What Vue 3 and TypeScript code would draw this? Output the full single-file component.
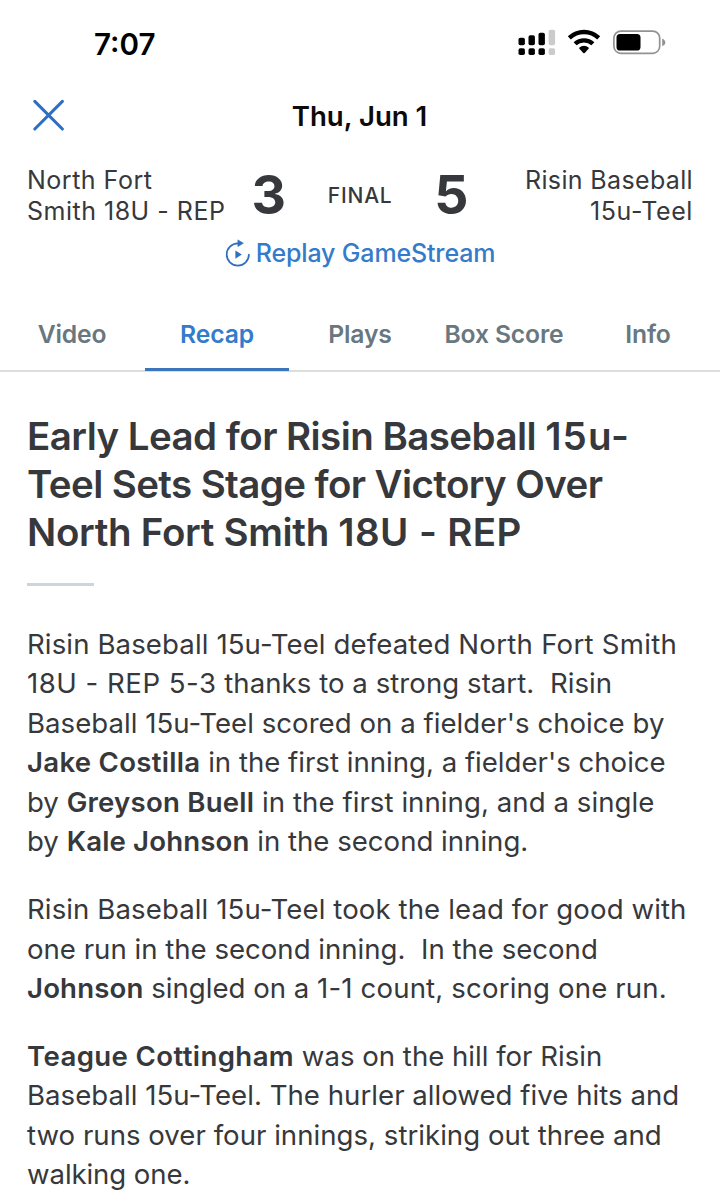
<script setup lang="ts">
interface Run { text: string; bold?: boolean; tracking?: number }
type Line = Run[]

const tabs: string[] = ['Video', 'Recap', 'Plays', 'Box Score', 'Info']
const activeTab = 'Recap'

const headline: Line[] = [
  [{ text: 'Early Lead for Risin Baseball ', tracking: -0.55 }, { text: '15u-', tracking: 1.1 }],
  [{ text: 'Teel Sets Stage for Victory Over', tracking: -0.6 }],
  [{ text: 'North Fort Smith ', tracking: -0.3 }, { text: '18U - REP', tracking: 0.4 }],
]

const paragraphs: Line[][] = [
  [
    [{ text: 'Risin Baseball 15u-Teel defeated ', tracking: 0.11 }, { text: 'North Fort Smith', tracking: 0.27 }],
    [{ text: '18U - REP 5-3', tracking: 0.5 }, { text: ' thanks to a strong start.  Risin', tracking: 0.04 }],
    [{ text: "Baseball 15u-Teel scored on a fielder's choice by", tracking: 0.03 }],
    [{ text: 'Jake Costilla', bold: true, tracking: 0.28 }, { text: " in the first inning, a fielder's choice" }],
    [{ text: 'by ' }, { text: 'Greyson Buell', bold: true, tracking: 0.22 }, { text: ' in the first inning, and a single', tracking: 0.06 }],
    [{ text: 'by ' }, { text: 'Kale Johnson', bold: true, tracking: 0.14 }, { text: ' in the second inning.' }],
  ],
  [
    [{ text: 'Risin Baseball 15u-Teel took the lead for good with', tracking: 0.1 }],
    [{ text: 'one run in the second inning.  In the second' }],
    [{ text: 'Johnson', bold: true, tracking: 0.15 }, { text: ' singled on a ' }, { text: '1-1 count, scoring one run.', tracking: 0.16 }],
  ],
  [
    [{ text: 'Teague Cottingham', bold: true, tracking: 0.38 }, { text: ' was on the hill for Risin' }],
    [{ text: 'Baseball 15u-Teel. The hurler allowed five hits and', tracking: 0.03 }],
    [{ text: 'two runs over four innings, striking out three and', tracking: 0.02 }],
    [{ text: 'walking one.', tracking: -0.1 }],
  ],
]

const spacing = (run: Run) => ({ letterSpacing: `${run.tracking ?? 0}px` })
</script>

<template>
  <main class="screen">
    <div class="status">
      <span class="time">7:07</span>
      <svg class="indicators" width="150" height="30" viewBox="0 0 150 30">
        <rect x="0.5" y="9.8" width="6.4" height="7.4" rx="1.8" />
        <rect x="10.5" y="7.3" width="6.4" height="9.9" rx="1.8" />
        <rect x="20.5" y="4.8" width="6.4" height="12.4" rx="1.8" />
        <rect x="0.5" y="20.2" width="6.4" height="6.8" rx="1.8" />
        <rect x="10.5" y="20.2" width="6.4" height="6.8" rx="1.8" />
        <rect x="20.5" y="20.2" width="6.4" height="6.8" rx="1.8" />
        <g fill="#cbcbcb">
          <rect x="30.7" y="1.8" width="6.4" height="15.4" rx="1.8" />
          <rect x="30.7" y="20.2" width="6.4" height="6.8" rx="1.8" />
        </g>
        <g fill="none" stroke="#000" stroke-width="4.3">
          <path d="M51.3 9.9a21.2 21.2 0 0 1 29.4 0" />
          <path d="M57.1 15.8a13 13 0 0 1 17.8 0" />
        </g>
        <path d="M61.4 19.6a6.8 6.8 0 0 1 9.2 0l.2.8-4.1 4.6q-.7.6-1.4 0l-4.1-4.6z" />
        <rect x="95.9" y="3.1" width="45.8" height="22.2" rx="7" fill="none" stroke="#929292" stroke-width="1.7" />
        <rect x="98.5" y="5.9" width="24" height="16.6" rx="3.6" />
        <path d="M144.2 10.8q3.1 1 3.1 3.6t-3.1 3.7z" fill="#929292" />
      </svg>
    </div>

    <header class="nav">
      <svg class="close" width="34" height="34" viewBox="0 0 34 34">
        <path d="M2.8 2.4L30.4 30M30.4 2.4L2.8 30" fill="none" stroke="#2f6fc0" stroke-width="3.1" stroke-linecap="round" />
      </svg>
      <h1 class="date">Thu, Jun 1</h1>
    </header>

    <section class="scoreboard">
      <div class="team">North Fort<br />Smith 18U - REP</div>
      <div class="result">
        <strong class="score">3</strong>
        <span class="final">FINAL</span>
        <strong class="score">5</strong>
      </div>
      <div class="team away">Risin Baseball<br /><span class="squad">15u-Teel</span></div>
    </section>

    <div class="replay">
      <svg width="26" height="30" viewBox="0 0 26 30">
        <path d="M14.2 5.4H12.8A11.1 11.1 0 1 0 23.9 16.5" fill="none" stroke="#2f6fc0" stroke-width="1.7" stroke-linecap="round" />
        <path d="M12.9 1.9L18.4 5.2L12.9 8.5Z" fill="#2f6fc0" stroke="#2f6fc0" stroke-width="0.6" stroke-linejoin="round" />
        <path d="M10.4 12.4v8.4l6.4-4.2z" fill="#2f6fc0" />
      </svg>
      <span>Replay GameStream</span>
    </div>

    <nav class="tabs">
      <div v-for="tab in tabs" :key="tab" class="tab" :class="{ active: tab === activeTab }"><span>{{ tab }}</span></div>
    </nav>

    <article class="recap">
      <h2>
        <span v-for="(line, j) in headline" :key="j" class="line"><span v-for="(run, k) in line" :key="k" :style="spacing(run)">{{ run.text }}</span></span>
      </h2>
      <div class="rule"></div>
      <p v-for="(para, i) in paragraphs" :key="i">
        <span v-for="(line, j) in para" :key="j" class="line"><span v-for="(run, k) in line" :key="k" :class="{ bold: run.bold }" :style="spacing(run)">{{ run.text }}</span></span>
      </p>
    </article>
  </main>
</template>

<style>
body { margin: 0; background: #fff; }
</style>

<style scoped>
.screen {
  width: 720px;
  height: 1200px;
  overflow: hidden;
  background: #fff;
  color: #37383b;
  font-family: Inter, "Liberation Sans", sans-serif;
  box-sizing: border-box;
}
.status {
  height: 86px;
  display: flex;
  justify-content: space-between;
  align-items: center;
  box-sizing: border-box;
  padding: 0 52px 0 94px;
  color: #000;
}
.time { padding-top: 2px; font-size: 29.6px; font-weight: 600; line-height: 34px; }
.nav {
  height: 60px;
  display: grid;
  grid-template-columns: 1fr auto 1fr;
  align-items: center;
  padding: 0 33px 0 32px;
}
.close { display: block; }
.date { margin: 0; color: #0b0b0c; font-size: 27.6px; font-weight: 600; line-height: 34px; }
.scoreboard {
  height: 78px;
  display: grid;
  grid-template-columns: 1fr 217px 1fr;
  padding: 19px 27px 0;
  box-sizing: border-box;
}
.team { font-size: 25px; line-height: 31.3px; letter-spacing: 0.5px; white-space: nowrap; }
.away { text-align: right; letter-spacing: 0.35px; }
.squad { letter-spacing: 0.6px; }
.result { display: flex; justify-content: space-between; align-items: center; height: 60px; }
.score { font-size: 53.5px; line-height: 62px; font-weight: 700; }
.final { font-size: 21px; font-weight: 500; letter-spacing: 0.8px; }
.replay {
  height: 58px;
  display: flex;
  justify-content: center;
  align-items: center;
  gap: 5px;
  color: #347bcb;
  font-size: 25px;
  font-weight: 500;
  letter-spacing: -0.15px;
}
.tabs {
  margin-top: 15px;
  height: 75px;
  box-sizing: border-box;
  display: grid;
  grid-template-columns: repeat(5, 144px);
  border-bottom: 2px solid #dcdddd;
}
.tab {
  height: 74px;
  box-sizing: border-box;
  display: flex;
  justify-content: center;
  align-items: center;
  padding-top: 3px;
  color: #687780;
  font-size: 24.7px;
  font-weight: 600;
  letter-spacing: -0.15px;
  border-bottom: 3px solid transparent;
}
.active { margin: 0 -1px 0 1px; color: #347bcb; border-bottom-color: #3b76bd; }
.recap { padding: 40px 27px 0; }
h2 { margin: 0; font-size: 38.5px; line-height: 48px; font-weight: 600; }
.line { display: block; white-space: pre; }
.rule { width: 67px; height: 3px; margin: 27px 0 39px; background: #cbd5de; }
p { margin: 0 0 28.7px; font-size: 27.6px; line-height: 39.4px; }
.bold { font-weight: 600; }
</style>
